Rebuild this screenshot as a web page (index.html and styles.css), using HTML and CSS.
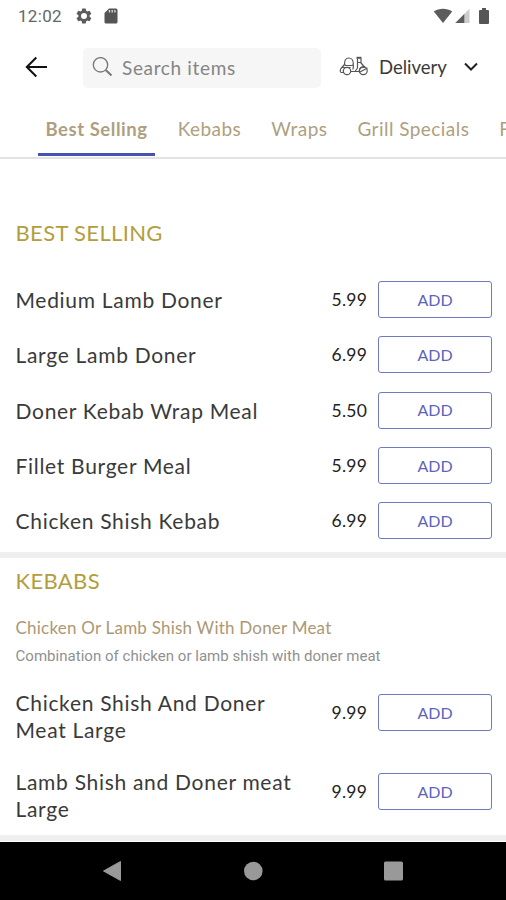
FILE: index.html
```html
<!DOCTYPE html>
<html lang="en">
<head>
    <meta charset="UTF-8">
    <meta name="viewport" content="width=device-width, initial-scale=1.0">
    <title>Menu</title>
    <link rel="stylesheet" href="styles.css">
</head>
<body>
    <div class="screen">
        <!-- Status bar -->
        <div class="status-bar">
            <span class="time">12:02</span>
            <svg class="gear" width="18" height="18" viewBox="0 0 24 24"><path fill="#5c5c5c" fill-rule="evenodd" d="M19.4 13a7.500 7.500 0 0 0 0-2l2.100-1.700c.2-.1.300-.4.100-.6l-2-3.500c-.1-.2-.4-.3-.6-.2l-2.500 1a7.300 7.300 0 0 0-1.700-1l-.4-2.600a.5.5 0 0 0-.5-.4h-4a.5.5 0 0 0-.5.400L9 5a7.700 7.700 0 0 0-1.700 1l-2.500-1c-.2-.1-.5 0-.6.200l-2 3.500c-.1.200-.1.500.1.600L4.500 11a7.900 7.900 0 0 0 0 2l-2.200 1.700c-.2.100-.2.400-.1.600l2 3.500c.1.200.4.300.6.200l2.500-1c.5.400 1.100.7 1.700 1l.4 2.600c0 .2.200.4.500.4h4c.3 0 .5-.2.500-.4l.4-2.600a7.300 7.300 0 0 0 1.700-1l2.500 1c.2.100.5 0 .6-.2l2-3.500c.1-.2.100-.5-.1-.6zM12 16a4 4 0 1 1 0-8 4 4 0 0 1 0 8z"/></svg>
            <svg class="sd-card" width="14" height="16" viewBox="0 0 14 16"><path fill="#555" d="M5 .5h7a1.500 1.500 0 0 1 1.500 1.500v12a1.500 1.500 0 0 1-1.500 1.500H2A1.500 1.500 0 0 1 .5 14V5z"/><path stroke="#ddd" stroke-width="1.300" d="M5.500 2v2.600M8.200 2v2.600M10.900 2v2.600"/></svg>
            <div class="status-right">
                <svg width="20" height="16" viewBox="0 0 20 16"><path fill="#5c5c5c" d="M.8 3.500C6-.3 14-.3 19.200 3.500L10 15z"/></svg>
                <svg width="15" height="16" viewBox="0 0 15 16"><path fill="#ccc" d="M14.500.8V15H.3z"/><path fill="#5c5c5c" d="M9.300 6v9H.3z"/></svg>
                <svg class="battery" width="10" height="17" viewBox="0 0 10 17"><path fill="#555" d="M3 0h4v2h2a1 1 0 0 1 1 1v12a1 1 0 0 1-1 1H1a1 1 0 0 1-1-1V3a1 1 0 0 1 1-1h2z"/></svg>
            </div>
        </div>

        <!-- Search header -->
        <div class="header">
            <svg class="back" width="24" height="24" viewBox="0 0 24 24" fill="none" stroke="#111" stroke-width="2"><path d="M23 12H3M12.300 2.500 2.800 12l9.500 9.500"/></svg>
            <div class="search">
                <svg width="22" height="22" viewBox="0 0 22 22" fill="none" stroke="#777"><circle cx="8.500" cy="7.800" r="7.200" stroke-width="1.300"/><path stroke-width="2" d="m13.700 13 5.800 5.500"/></svg>
                <span class="placeholder">Search items</span>
            </div>
            <div class="mode">
                <svg width="30" height="22" viewBox="0 0 30 22" fill="none" stroke="#555" stroke-width="1.200" stroke-linejoin="round">
                    <path d="M5.500 8C5.500 4 7 2 9.800 2s4.500 2 4.500 6c0 1.200-1 1.500-2 1.500H7.500c-1 0-2-.3-2-1.500z"/>
                    <path d="M5.500 8.500 2 12.500C.8 14.500 1 16.500 2.500 16.500h2M14.300 8.500c0 2 .3 3-.5 5M3 11.500h8.500"/>
                    <circle cx="8" cy="15" r="3.700"/>
                    <path d="M11.700 15.500h8.500c0-4 2.800-5 5.800-4M22 2.500v4.500l4 4.500M18.500 2.500V12L16 15.500M18.500 6.500H22"/>
                    <path stroke-width="2" d="M17.500 1.800h5"/>
                    <circle cx="24.300" cy="14.800" r="3.900"/>
                    <path d="m20 16.500 8.500-4.500"/>
                </svg>
                <span>Delivery</span>
                <svg class="chevron" width="16" height="10" viewBox="0 0 16 10" fill="none" stroke="#222" stroke-width="2"><path d="m2 1.500 6 6 6-6"/></svg>
            </div>
        </div>

        <!-- Category tabs -->
        <div class="tabs">
            <div class="tab active">Best Selling</div>
            <div class="tab">Kebabs</div>
            <div class="tab">Wraps</div>
            <div class="tab">Grill Specials</div>
            <div class="tab">F</div>
        </div>

        <!-- Menu -->
        <div class="menu">
            <div class="section best">
                <h2>BEST SELLING</h2>
                <div class="item"><span class="name">Medium Lamb Doner</span><span class="price">5.99</span><button type="button">ADD</button></div>
                <div class="item"><span class="name">Large Lamb Doner</span><span class="price">6.99</span><button type="button">ADD</button></div>
                <div class="item"><span class="name">Doner Kebab Wrap Meal</span><span class="price">5.50</span><button type="button">ADD</button></div>
                <div class="item"><span class="name">Fillet Burger Meal</span><span class="price">5.99</span><button type="button">ADD</button></div>
                <div class="item"><span class="name">Chicken Shish Kebab</span><span class="price">6.99</span><button type="button">ADD</button></div>
            </div>
            <div class="section kebabs">
                <h2>KEBABS</h2>
                <h3>Chicken Or Lamb Shish With Doner Meat</h3>
                <p>Combination of chicken or lamb shish with doner meat</p>
                <div class="item tall"><span class="name">Chicken Shish And Doner<br>Meat Large</span><span class="price">9.99</span><button type="button">ADD</button></div>
                <div class="item tall"><span class="name">Lamb Shish and Doner meat<br>Large</span><span class="price">9.99</span><button type="button">ADD</button></div>
            </div>
        </div>

        <!-- Android navigation -->
        <div class="nav-bar">
            <svg width="20" height="22" viewBox="0 0 20 22"><path fill="#999" d="M18.500 1.500v19L1.500 11z" stroke="#999" stroke-linejoin="round"/></svg>
            <svg width="20" height="20" viewBox="0 0 20 20"><circle cx="10.300" cy="10" r="9.300" fill="#999"/></svg>
            <svg width="20" height="20" viewBox="0 0 20 20"><rect x="0" y=".5" width="19" height="19" rx="1.500" fill="#999"/></svg>
        </div>
    </div>
</body>
</html>
```
FILE: styles.css
```css
body {
    margin: 0;
    background: #fff;
    font-family: Lato, "Liberation Sans", sans-serif;
    color: #3a3a3a;
}
.screen {
    width: 506px;
    height: 900px;
    display: flex;
    flex-direction: column;
    overflow: hidden;
}
svg {
    display: block;
    flex: none;
}
.status-bar {
    height: 32px;
    flex: none;
    display: flex;
    align-items: center;
    padding: 0 17px 0 18px;
    box-sizing: border-box;
}
.time {
    width: 57px;
    font-family: Roboto, sans-serif;
    font-size: 17px;
    letter-spacing: 0.3px;
    color: #666;
}
.sd-card {
    margin-left: 11px;
}
.status-right {
    display: flex;
    align-items: center;
    gap: 2px;
    margin-left: auto;
}
.battery {
    margin-left: 7px;
}
.header {
    height: 72px;
    flex: none;
    display: flex;
    align-items: center;
    padding: 0 27px 0 24px;
}
.back {
    margin-right: 35px;
    margin-top: -3px;
}
.search {
    width: 238px;
    height: 40px;
    display: flex;
    align-items: center;
    background: #f6f6f6;
    border-radius: 5px;
    box-sizing: border-box;
    padding-left: 9px;
    margin-bottom: 1px;
}
.placeholder {
    margin-left: 8px;
    font-size: 19px;
    letter-spacing: 0.65px;
    color: #858585;
}
.mode {
    flex: 1;
    display: flex;
    align-items: center;
    margin-left: 18px;
    margin-bottom: 3px;
    font-size: 18.500px;
    white-space: nowrap;
}
.mode span {
    margin-left: 10px;
}
.chevron {
    margin-left: auto;
}
.tabs {
    height: 55px;
    flex: none;
    display: flex;
    box-sizing: border-box;
    padding-left: 38px;
    gap: 15px;
    border-bottom: 2px solid #e3e3e6;
    overflow: hidden;
}
.tab {
    flex: none;
    box-sizing: border-box;
    height: 52px;
    padding: 0 7.500px;
    line-height: 50px;
    font-size: 19px;
    letter-spacing: 0.45px;
    color: #ae9f80;
    white-space: nowrap;
}
.tab.active {
    font-weight: bold;
    font-size: 18.500px;
    letter-spacing: 0.55px;
    border-bottom: 3px solid #4552b1;
}
.menu {
    flex: 1;
    overflow: hidden;
}
.section {
    border-bottom: 6px solid #efefef;
    box-sizing: border-box;
    padding: 0 14px 0 15.500px;
}
.best {
    height: 399px;
    padding-top: 60px;
}
.kebabs {
    height: 283px;
    padding-top: 9px;
}
h2 {
    margin: 0;
    font-size: 22px;
    line-height: 28px;
    font-weight: normal;
    letter-spacing: 0.35px;
    color: #b29e3c;
}
.best h2 {
    margin-bottom: 25px;
}
h3 {
    margin: 21px 0 0;
    font-size: 17px;
    line-height: 24px;
    font-weight: normal;
    letter-spacing: 0.22px;
    color: #ac9874;
}
p {
    margin: 6px 0 7px;
    font-family: Roboto, sans-serif;
    font-size: 15px;
    line-height: 20px;
    letter-spacing: 0.03px;
    color: #909090;
}
.item {
    height: 55.300px;
    display: flex;
    align-items: center;
}
.item.tall {
    height: 79.300px;
}
.name {
    flex: 1;
    font-size: 21px;
    line-height: 27px;
    letter-spacing: 0.7px;
    white-space: nowrap;
}
.tall .name {
    padding-top: 6px;
}
.price {
    font-size: 17.500px;
    letter-spacing: 0.2px;
    margin-right: 11px;
    color: #222;
}
button {
    width: 114px;
    height: 37px;
    border: 1.500px solid #7079c2;
    border-radius: 3px;
    background: #fff;
    color: #5d64b9;
    font-family: inherit;
    font-size: 16px;
    padding: 0 0 1px;
}
.nav-bar {
    height: 58px;
    flex: none;
    display: flex;
    align-items: center;
    justify-content: space-between;
    box-sizing: border-box;
    padding: 0 102px;
    background: #000;
}
```
